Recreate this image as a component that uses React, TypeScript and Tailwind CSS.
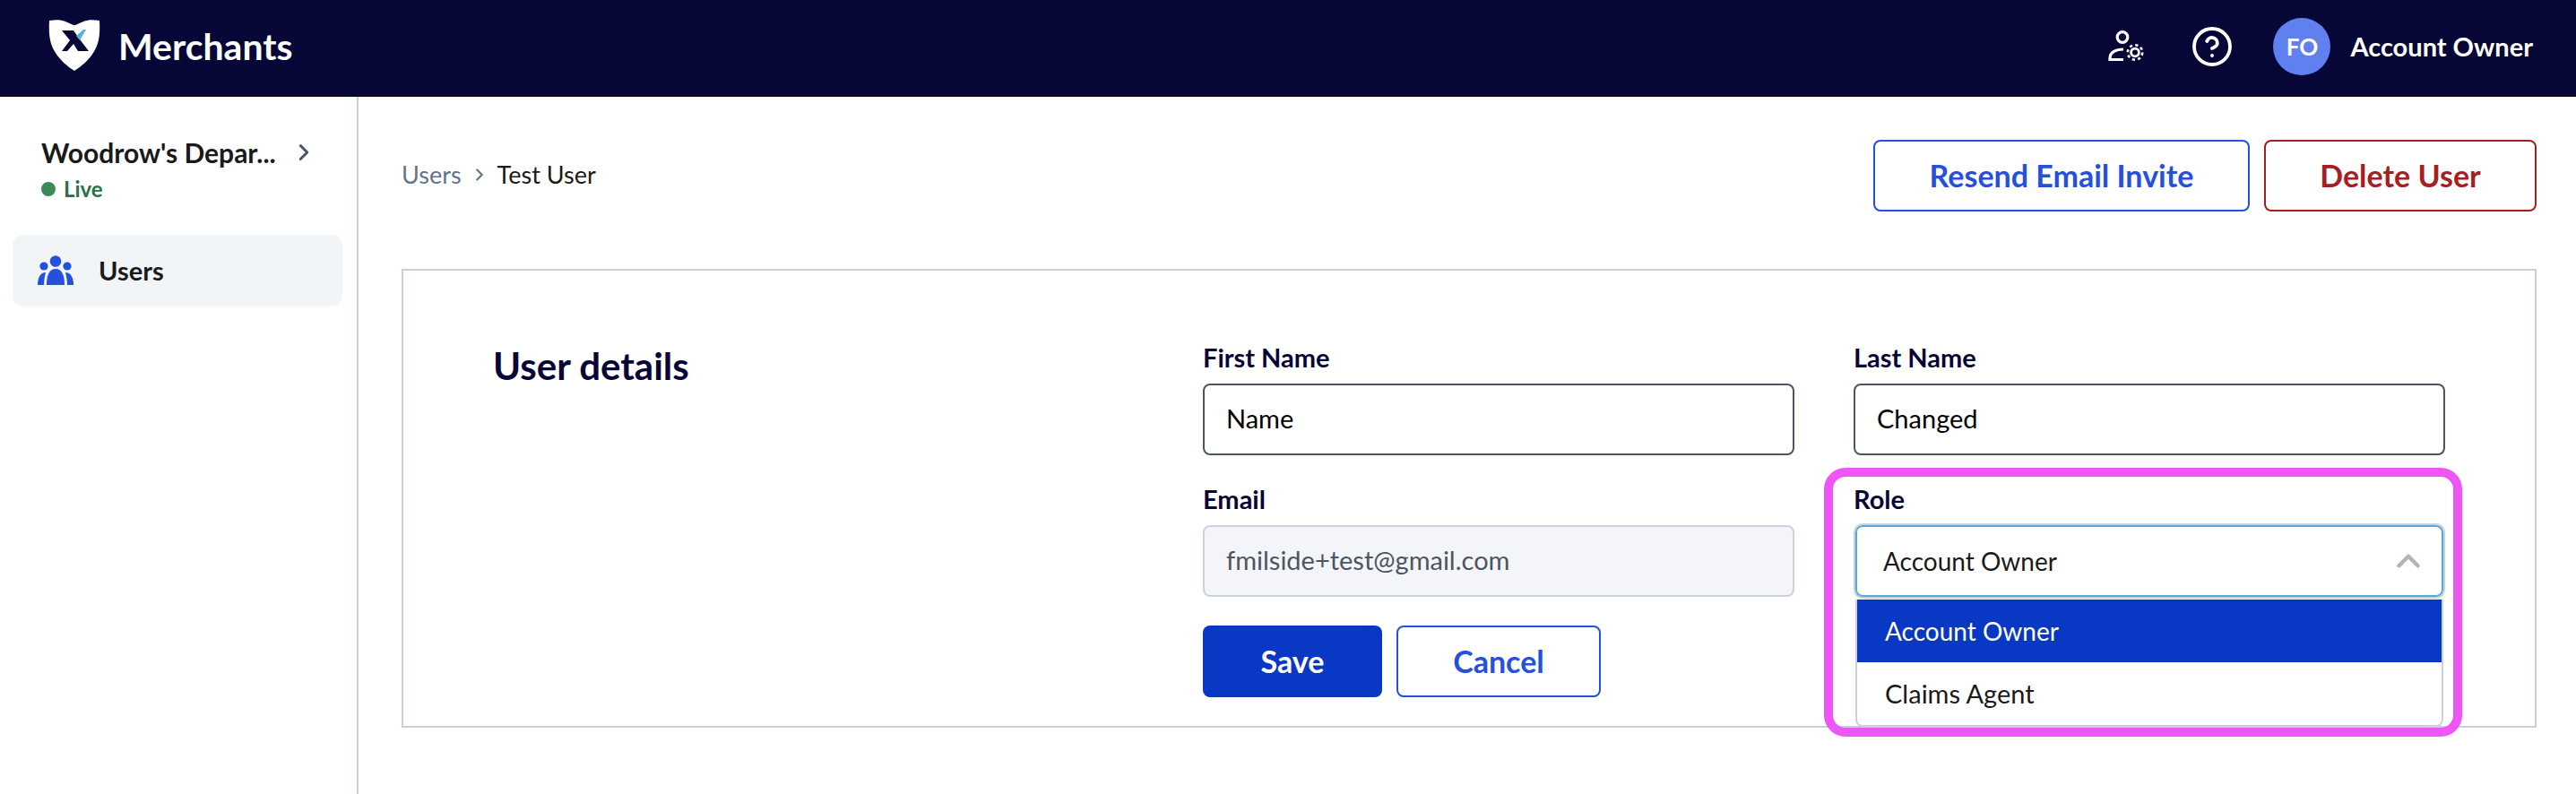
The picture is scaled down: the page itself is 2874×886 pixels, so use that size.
import { ChevronRight, ChevronUp, CircleHelp } from 'lucide-react';

function ShieldLogo() {
  return (
    <svg width="58" height="60" viewBox="0 0 58 60" className="shrink-0 mb-[4px]">
      <path
        d="M1 3 C8 2 14 2 19 4 C24 6 27 8 29 8 C31 8 34 6 39 4 C44 2 50 2 57 3 C58 20 56 30 50 39 C45 47 37 54 29 59 C21 54 13 47 8 39 C2 30 0 20 1 3 Z"
        fill="#ffffff"
      />
      <path d="M15 14 H28 L35 24 L45 37 H33 L28 29 L21 37 H15 L24 25 Z" fill="#060736" />
      <path d="M31 20 L39 13 H42 L35 25 Z" fill="#5aaee0" />
    </svg>
  );
}

function UserGear() {
  return (
    <svg width="40" height="36" viewBox="0 0 40 36" fill="none" stroke="#ffffff" strokeWidth="3.2" className="shrink-0">
      <circle cx="16" cy="7.5" r="5.8" />
      <path d="M17 21 C9 21 2 24 2 31 V32.5 H17" />
      <circle cx="30" cy="24.5" r="4.4" strokeWidth="2.8" />
      <circle cx="30" cy="24.5" r="8.2" strokeWidth="2.6" strokeDasharray="3.2 3.24" />
    </svg>
  );
}

function UsersIcon() {
  return (
    <svg width="40" height="34" viewBox="0 0 40 34" fill="#2450dc" className="shrink-0">
      <circle cx="20" cy="6.5" r="6.3" />
      <circle cx="7" cy="12" r="4.6" />
      <circle cx="33" cy="12" r="4.6" />
      <path d="M10 33 C10 22 13 15 20 15 C27 15 30 22 30 33 Z" />
      <path d="M0 33 C0 25 3 19 9 19 C8 23 7 28 7 33 Z" />
      <path d="M40 33 C40 25 37 19 31 19 C32 23 33 28 33 33 Z" />
    </svg>
  );
}

function FieldLabel({ children }: { children: React.ReactNode }) {
  return <p className="text-[29px] leading-[36px] font-bold text-[#060736] mb-[11px]">{children}</p>;
}

export default function App() {
  return (
    <div className="min-h-screen bg-white font-['Lato',sans-serif] flex flex-col">
      <header className="h-[108px] bg-[#060736] flex items-center justify-between pl-[54px] pr-[48px] pb-[4px] shrink-0">
        <div className="flex items-center gap-[20px]">
          <ShieldLogo />
          <span className="text-[41px] font-bold text-white">Merchants</span>
        </div>
        <div className="flex items-center">
          <UserGear />
          <CircleHelp size={48} strokeWidth={1.9} color="#ffffff" className="ml-[52px]" />
          <div className="ml-[44px] w-[64px] h-[64px] rounded-full bg-[#6080f0] flex items-center justify-center text-[26px] font-bold text-white">
            FO
          </div>
          <span className="ml-[22px] text-[29px] font-bold text-white">Account Owner</span>
        </div>
      </header>

      <div className="flex flex-1">
        <aside className="w-[400px] shrink-0 border-r-2 border-[#c8d0dc] pt-[40px] pl-[14px] pr-[16px]">
          <div className="pl-[32px]">
            <div className="flex items-center h-[44px]">
              <span className="text-[30px] font-bold text-[#1a1a1a] w-[278px]">Woodrow's Depar...</span>
              <ChevronRight size={30} strokeWidth={2.4} color="#4b5563" />
            </div>
            <div className="flex items-center gap-[9px] mt-[3px]">
              <span className="w-[16px] h-[16px] rounded-full bg-[#3c8a5a]" />
              <span className="text-[24px] leading-[32px] font-bold text-[#2c7048]">Live</span>
            </div>
          </div>
          <div className="mt-[35px] h-[80px] rounded-[12px] bg-[#f1f5f8] flex items-center pl-[28px]">
            <UsersIcon />
            <span className="ml-[28px] text-[29px] font-bold text-[#1a1a1a]">Users</span>
          </div>
        </aside>

        <main className="flex-1 pl-[48px] pr-[44px] pt-[48px]">
          <div className="flex items-center justify-between">
            <div className="flex items-center text-[27px] pb-[2px]">
              <span className="text-[#64748b]">Users</span>
              <ChevronRight size={22} strokeWidth={2.4} color="#64748b" className="mx-[9px]" />
              <span className="text-[#1a1a1a]">Test User</span>
            </div>
            <div className="flex gap-[16px]">
              <button className="w-[420px] h-[80px] pb-[2px] rounded-[8px] border-2 border-[#2450dc] text-[34px] font-bold text-[#2450dc]">
                Resend Email Invite
              </button>
              <button className="w-[304px] h-[80px] pb-[2px] rounded-[8px] border-2 border-[#a61e22] text-[34px] font-bold text-[#a61e22]">
                Delete User
              </button>
            </div>
          </div>

          <section className="mt-[64px] h-[512px] border-2 border-[#c8d0dc] pl-[100px] pr-[100px] pt-[79px] flex">
            <h2 className="w-[792px] shrink-0 text-[42px] leading-[54px] font-bold text-[#060736]">User details</h2>
            <div className="flex-1 grid grid-cols-2 gap-x-[66px] content-start">
              <div>
                <FieldLabel>First Name</FieldLabel>
                <div className="h-[80px] pb-[2px] rounded-[8px] border-2 border-[#4b5563] flex items-center pl-[24px] text-[29px] text-black">
                  Name
                </div>
              </div>
              <div>
                <FieldLabel>Last Name</FieldLabel>
                <div className="h-[80px] pb-[2px] rounded-[8px] border-2 border-[#4b5563] flex items-center pl-[24px] text-[29px] text-black">
                  Changed
                </div>
              </div>
              <div className="mt-[31px]">
                <FieldLabel>Email</FieldLabel>
                <div className="h-[80px] pb-[2px] rounded-[8px] border-2 border-[#cbd2dc] bg-[#f4f5f9] flex items-center pl-[24px] text-[29px] text-[#4b5563]">
                  fmilside+test@gmail.com
                </div>
              </div>
              <div className="mt-[31px] relative">
                <FieldLabel>Role</FieldLabel>
                <div className="mx-[2px] mt-[2px] h-[80px] rounded-[8px] border-2 border-[#55a9dc] outline-2 outline-[#c8d0dc] flex items-center justify-between pl-[29px] pr-[16px] text-[28px] text-[#1a1a1a]">
                  Account Owner
                  <ChevronUp size={42} strokeWidth={2.6} color="#b0b5bd" />
                </div>
                <div className="absolute left-[2px] right-[2px] top-[130px] rounded-b-[8px] border-x-2 border-b-2 border-[#cbd2dc] bg-white">
                  <div className="h-[70px] bg-[#0938c4] text-[28px] text-white flex items-center pl-[31px]">Account Owner</div>
                  <div className="h-[70px] text-[29px] text-[#1a1a1a] flex items-center pl-[31px]">Claims Agent</div>
                </div>
                {/* annotation drawn over the screenshot */}
                <div className="absolute left-[-33px] right-[-19px] top-[-17px] h-[300px] rounded-[24px] border-[10px] border-[#ee55f5] pointer-events-none" />
              </div>
              <div className="mt-[32px] flex gap-[16px] col-start-1">
                <button className="w-[200px] h-[80px] pb-[2px] rounded-[8px] bg-[#0938c4] text-[34px] font-bold text-white">Save</button>
                <button className="w-[228px] h-[80px] pb-[2px] rounded-[8px] border-2 border-[#2450dc] text-[34px] font-bold text-[#2450dc]">
                  Cancel
                </button>
              </div>
            </div>
          </section>
        </main>
      </div>
    </div>
  );
}
